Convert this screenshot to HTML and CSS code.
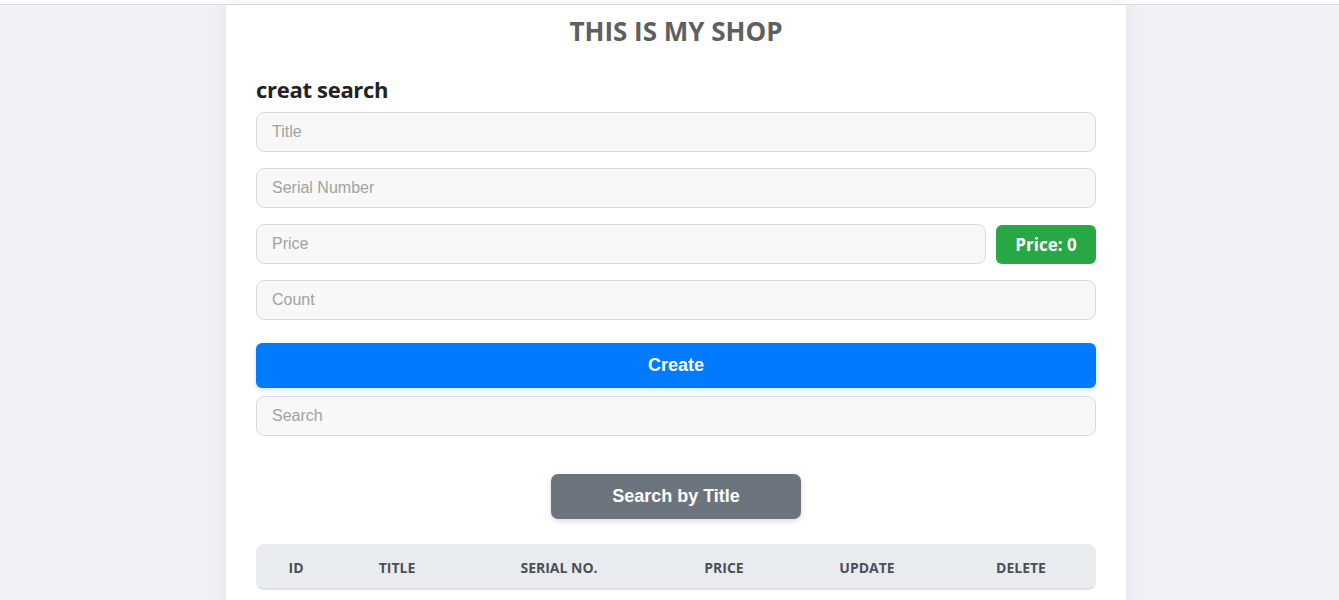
FILE: index.html
```html
<!DOCTYPE html>
<html>
<head>
<meta charset="utf-8">
<link rel="stylesheet" href="styles.css">
</head>
<body>
<div class="topbar"></div>
<div class="page">
<main class="shop">
  <h1 class="shop-title">THIS IS MY SHOP</h1>
  <h2 class="section-title">creat search</h2>
  <div class="form">
    <input class="field" type="text" placeholder="Title">
    <input class="field" type="text" placeholder="Serial Number">
    <div class="price-row">
      <input class="field" type="text" placeholder="Price">
      <span class="price-badge">Price: 0</span>
    </div>
    <input class="field" type="text" placeholder="Count">
  </div>
  <button class="btn-create">Create</button>
  <input class="field search" type="text" placeholder="Search">
  <div class="search-actions">
    <button class="btn-search">Search by Title</button>
  </div>
  <table class="products">
    <thead>
      <tr>
        <th class="c-id">ID</th>
        <th class="c-title">TITLE</th>
        <th class="c-serial">SERIAL NO.</th>
        <th class="c-price">PRICE</th>
        <th class="c-update">UPDATE</th>
        <th class="c-delete">DELETE</th>
      </tr>
    </thead>
  </table>
</main>
</div>
</body>
</html>
```

FILE: styles.css
```css
* { box-sizing: border-box; }
html, body { margin: 0; padding: 0; }
body {
  background: #f0f1f5;
  font-family: "Open Sans", "Liberation Sans", sans-serif;
  overflow: hidden;
}
.topbar {
  height: 5px;
  background: #fff;
  border-bottom: 1px solid #dcdcdc;
}
.page {
  padding-left: 13px;
}
.shop {
  width: 900px;
  margin: 0 auto;
  background: #fff;
  padding: 9px 30px 30px;
  min-height: 700px;
  box-shadow: 0 0 14px rgba(0,0,0,0.08);
}
.shop-title {
  margin: 0;
  text-align: center;
  font-size: 26px;
  font-weight: 700;
  color: #5f5f5f;
  line-height: 34px;
}
.section-title {
  margin: 26px 0 0;
  font-size: 22px;
  font-weight: 700;
  color: #222;
  line-height: 30px;
  letter-spacing: -0.3px;
}
.form {
  display: flex;
  flex-direction: column;
  gap: 16px;
  margin-top: 8px;
}
.field {
  display: block;
  width: 100%;
  height: 40px;
  padding: 0 15px;
  border: 1px solid #dcdcdc;
  border-radius: 8px;
  background: #f8f8f8;
  font-family: "Liberation Sans", Arial, sans-serif;
  font-size: 16px;
  color: #333;
  outline: none;
}
.field::placeholder { color: #a2a2a2; }
.price-row {
  display: flex;
  align-items: flex-start;
  gap: 10px;
  height: 40px;
}
.price-row .field { flex: 1; }
.price-badge {
  flex: 0 0 100px;
  height: 39px;
  margin-top: 1px;
  background: #28a745;
  color: #fff;
  border-radius: 6px;
  font-size: 17px;
  font-weight: 700;
  display: flex;
  align-items: center;
  justify-content: center;
}
.btn-create {
  display: block;
  width: 100%;
  height: 45px;
  margin-top: 23px;
  border: none;
  border-radius: 6px;
  background: #007bff;
  color: #fff;
  font-family: "Liberation Sans", Arial, sans-serif;
  font-size: 18px;
  font-weight: 700;
  box-shadow: 0 2px 5px rgba(0,123,255,0.2);
}
.search { margin-top: 8px; }
.search-actions {
  display: flex;
  justify-content: center;
  margin-top: 38px;
}
.btn-search {
  width: 250px;
  height: 45px;
  border: none;
  border-radius: 7px;
  background: #6c757d;
  color: #fff;
  font-family: "Liberation Sans", Arial, sans-serif;
  font-size: 18px;
  font-weight: 700;
  box-shadow: 0 2px 6px rgba(0,0,0,0.15);
}
.products {
  width: 100%;
  margin-top: 25px;
  border-collapse: separate;
  border-spacing: 0;
  table-layout: fixed;
}
.products th {
  height: 46px;
  padding: 2px 0 0;
  background: #e9ecef;
  border-bottom: 2px solid #dee2e6;
  font-size: 14px;
  font-weight: 700;
  color: #495057;
  text-align: center;
}
.products th:first-child { border-top-left-radius: 8px; border-bottom-left-radius: 8px; }
.products th:last-child { border-top-right-radius: 8px; border-bottom-right-radius: 8px; }
.c-id { width: 80px; }
.c-title { width: 122px; }
.c-serial { width: 202px; }
.c-price { width: 128px; }
.c-update { width: 158px; }
.c-delete { width: 150px; }
```
